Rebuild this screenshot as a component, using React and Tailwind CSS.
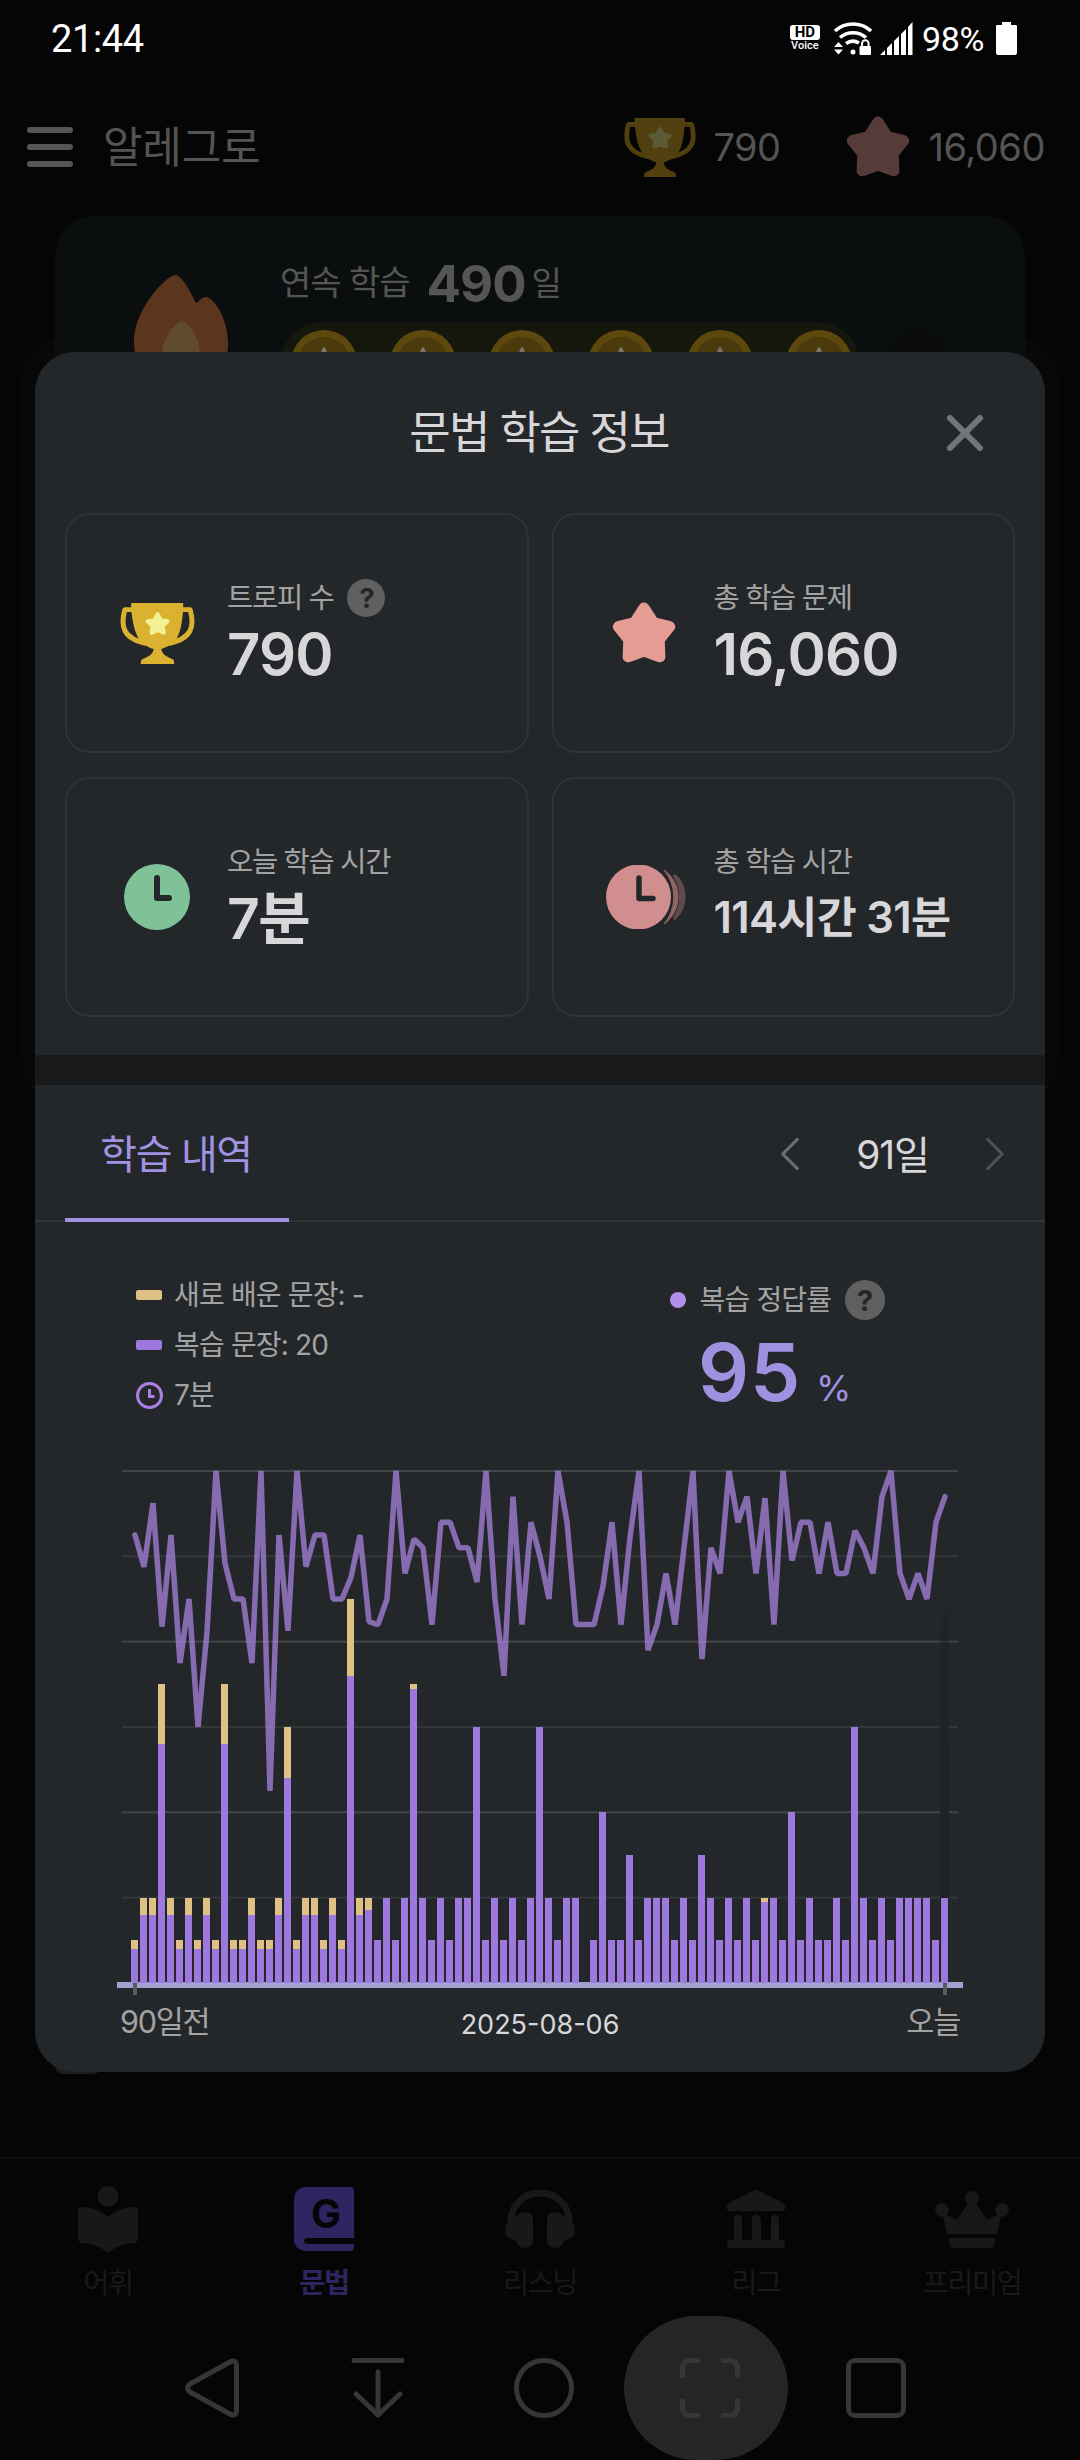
import { ChevronLeft, ChevronRight, X } from 'lucide-react'

// [reviewed, newly learned] sentences per day, oldest first
const SHORT = [8, 2]
const FULL = [16, 4]
const DAYS = [
  SHORT, FULL, FULL, [56, 14], FULL, SHORT, FULL, SHORT, FULL, SHORT,
  [56, 14], SHORT, SHORT, FULL, SHORT, SHORT, FULL, [48, 12], SHORT, FULL,
  FULL, SHORT, FULL, SHORT, [72, 18], FULL, [17, 3], [10, 0], [20, 0], [10, 0],
  [20, 0], [69, 1], [20, 0], [10, 0], [20, 0], [10, 0], [20, 0], [20, 0], [60, 0], [10, 0],
  [20, 0], [10, 0], [20, 0], [10, 0], [20, 0], [60, 0], [20, 0], [10, 0], [20, 0], [20, 0],
  [0, 0], [10, 0], [40, 0], [10, 0], [10, 0], [30, 0], [10, 0], [20, 0], [20, 0], [20, 0],
  [10, 0], [20, 0], [10, 0], [30, 0], [20, 0], [10, 0], [20, 0], [10, 0], [20, 0], [10, 0],
  [19, 1], [20, 0], [10, 0], [40, 0], [10, 0], [20, 0], [10, 0], [10, 0], [20, 0], [10, 0],
  [60, 0], [20, 0], [10, 0], [20, 0], [10, 0], [20, 0], [20, 0], [20, 0], [20, 0], [10, 0],
  [20, 0],
]

// review accuracy in percent
const ACCURACY = [
  87.5, 81.3, 93.7, 69.6, 87.5, 62.5, 75, 50, 68.6, 100,
  82, 75, 75, 62.5, 100, 37.5, 87.5, 68.8, 100, 81.3,
  87.5, 87.5, 75, 75, 79.2, 87.5, 70.6, 70, 75, 100,
  80, 86.7, 85, 70, 90, 90, 85, 85, 78.3, 100,
  75, 60, 95, 70, 90, 83.3, 75, 100, 90, 70,
  70, 70, 77.5, 90, 70, 87, 100, 65, 70, 80,
  70, 85, 100, 63.3, 85, 80, 100, 90, 95, 80,
  94.7, 70, 100, 82.5, 90, 90, 80, 90, 80, 80,
  88.3, 85, 80, 95, 100, 80, 75, 80, 75, 90,
  95,
]

const BASE = 518
const UNIT = 4.267

function Trophy({ className, cup, star }) {
  return (
    <svg viewBox="0 0 225 184" className={className}>
      <path d="M38 20H14C0 70 8 108 80 122M187 20h24c14 50 6 88-66 102" fill="none" stroke={cup} strokeWidth="15" strokeLinejoin="round" />
      <path d="M35 0H190V12C188 60 180 98 165 114C152 128 136 135 124 139C126 155 140 163 158 169Q163 172 163 184H62Q62 172 67 169C85 163 99 155 101 139C90 136 75 129 62 115C46 98 36 60 33 12V2Z" fill={cup} />
      <path d="M113 34l9.500 18 20.500 3-15 14.500 3.500 20.500-18.500-9-18.500 9 3.500-20.500-15-14.500 20.500-3z" fill={star} stroke={star} strokeWidth="12" strokeLinejoin="round" />
    </svg>
  )
}

function Star({ className, color }) {
  return (
    <svg viewBox="0 0 64 62" className={className}>
      <path
        d="M32 6L41.400 20.500L57.700 24.700L47.200 37.900L47.900 54.800L32 49L16.100 54.800L16.800 37.900L6.300 24.700L22.600 20.500Z"
        fill={color} stroke={color} strokeWidth="11" strokeLinejoin="round"
      />
    </svg>
  )
}

function Clock() {
  return (
    <svg viewBox="0 0 66 66" className="w-[66px] h-[66px]">
      <circle cx="33" cy="33" r="33" fill="#80c297" />
      <path d="M33 14V34H45" fill="none" stroke="#24272a" strokeWidth="6" strokeLinecap="round" strokeLinejoin="round" />
    </svg>
  )
}

function ClockStack() {
  return (
    <svg viewBox="0 0 83 64" className="ml-[8px] w-[83px] h-[64px] shrink-0">
      <path d="M58 5A33 33 0 0 1 58 59A42 42 0 0 0 58 5Z" fill="#8f6567" stroke="#8f6567" strokeWidth="1" />
      <path d="M68 10A29 29 0 0 1 68 54A40 40 0 0 0 68 10Z" fill="#604a4d" stroke="#604a4d" strokeWidth="3" />
      <circle cx="32.500" cy="32" r="32.500" fill="#d18e8e" />
      <path d="M33 13V33.500H47" fill="none" stroke="#24272a" strokeWidth="5.500" strokeLinecap="round" strokeLinejoin="round" />
    </svg>
  )
}

function Help({ className }) {
  return (
    <span className={`flex items-center justify-center rounded-full bg-[#5f605f] text-[#24272a] font-bold leading-none ${className}`}>?</span>
  )
}

function StatCard({ icon, label, help, value, valueClass }) {
  return (
    <div className="h-[240px] rounded-[24px] border-2 border-[#313336] flex items-center pl-[54px]">
      <div className="w-[72px] flex items-center justify-center">{icon}</div>
      <div className="ml-[34px] pt-[6px]">
        <div className="h-[38px] flex items-center gap-[14px] text-[28.5px] text-[#a3a3a3] tracking-[-0.045em]">
          {label}
          {help && <Help className="w-[38px] h-[38px] text-[27px]" />}
        </div>
        <div className={`h-[74px] mb-[2px] flex items-center font-semibold text-[#d8d6d8] whitespace-nowrap ${valueClass}`}>{value}</div>
      </div>
    </div>
  )
}

function StatusBar() {
  return (
    <div className="h-[78px] pl-[51px] pr-[63px] flex items-center justify-between text-white font-[Roboto,sans-serif]">
      <span className="text-[38px] tracking-[-0.01em]">21:44</span>
      <div className="flex items-center pb-[2px]">
        <div className="flex flex-col items-center w-[30px] mr-[14px]">
          <span className="w-[30px] h-[15px] rounded-[3px] bg-white text-black text-[15px] leading-[15px] font-bold text-center">HD</span>
          <span className="text-[11px] leading-[12px] font-medium">Voice</span>
        </div>
        <svg viewBox="0 0 38 33" className="w-[38px] h-[33px] mr-[8px]">
          <g fill="none" stroke="#fff" strokeWidth="3.500">
            <path d="M1 9A27 27 0 0 1 37 9" />
            <path d="M6 15.500A20 20 0 0 1 32 15.500" />
            <path d="M12 21.500A12 12 0 0 1 25 21" />
          </g>
          <path d="M0 25L4.500 20L9 25ZM0 27.500L4.500 32.500L9 27.500Z" fill="#fff" />
          <circle cx="19" cy="30" r="2.500" fill="#fff" />
          <rect x="25.500" y="24" width="11.500" height="9" rx="1" fill="#fff" />
          <path d="M28 25V21.500A3.300 3.300 0 0 1 34.600 21.500V25" fill="none" stroke="#fff" strokeWidth="2" />
        </svg>
        <svg viewBox="0 0 33 33" className="w-[33px] h-[33px] mr-[9px]">
          <path d="M0 33L5 28V33ZM7 33V26L12 21V33ZM14 33V19L19 14V33ZM21 33V12L26 7V33ZM28 33V5L32.500 0V33Z" fill="#fff" />
        </svg>
        <span className="pt-[2px] text-[34px] tracking-[-0.01em] mr-[12px]">98%</span>
        <svg viewBox="0 0 21 33" className="w-[21px] h-[33px]">
          <path d="M6 0H15V3H20Q21 3 21 4V31Q21 33 19 33H2Q0 33 0 31V4Q0 3 1 3H6Z" fill="#fff" />
        </svg>
      </div>
    </div>
  )
}

function Header() {
  return (
    <div className="h-[138px] pl-[27px] pr-[35px] flex items-center text-[#545454]">
      <div className="flex flex-col gap-[11px]">
        <span className="w-[46px] h-[6px] rounded-full bg-[#555]" />
        <span className="w-[46px] h-[6px] rounded-full bg-[#555]" />
        <span className="w-[46px] h-[6px] rounded-full bg-[#555]" />
      </div>
      <span className="ml-[30px] pt-[1px] text-[43px] tracking-[-0.005em]">알레그로</span>
      <Trophy className="ml-auto w-[72px] h-[59px]" cup="#513f0f" star="#5b5b38" />
      <span className="ml-[18px] text-[38px] tracking-[-0.015em]">790</span>
      <Star className="ml-[65px] w-[64px] h-[62px]" color="#573b38" />
      <span className="ml-[19px] text-[38px] tracking-[-0.012em]">16,060</span>
    </div>
  )
}

function StreakCard() {
  return (
    <div className="relative mx-[55px] h-[260px] rounded-[40px] bg-[#0b0e0f] flex pl-[79px] text-[#555]">
      <svg viewBox="0 0 94 120" className="mt-[59px] w-[94px] h-[120px]">
        <path d="M41 0C30 2 0 36 0 66C0 100 20 120 47 120S94 100 94 68C94 46 82 24 72 22C68 22 66 26 62 28C56 16 48 0 41 0Z" fill="#5b361c" />
        <path d="M47 46C40 48 28 64 28 80V120H66V80C66 62 54 46 47 46Z" fill="#604b2d" />
      </svg>
      <div className="ml-[52px]">
        <div className="mt-[36px] h-[62px] flex items-center">
          <span className="text-[34px] tracking-[-0.03em]">연속 학습</span>
          <span className="ml-[17px] text-[51px] font-bold tracking-[-0.02em]">490</span>
          <span className="ml-[6px] text-[33px]">일</span>
        </div>
        <div className="mt-[8px] w-[580px] h-[84px] rounded-full bg-[#15160c] flex gap-[33px] pt-[8px] pl-[11px]">
          {[1, 2, 3, 4, 5, 6].map((n) => (
            <svg key={n} viewBox="0 0 66 66" className="w-[66px] h-[66px] shrink-0">
              <circle cx="33" cy="33" r="33" fill="#5d490e" />
              <circle cx="33" cy="33" r="26" fill="#4b3b0c" />
              <path d="M28 30Q31 17 33 17T38 30Z" fill="#77776f" />
            </svg>
          ))}
          <span className="w-[66px] h-[66px] shrink-0 rounded-full bg-[#0a0b0b]" />
        </div>
      </div>
    </div>
  )
}

const TABS = [
  {
    label: '어휘',
    icon: (
      <svg viewBox="0 0 60 67" className="w-[60px] h-[67px]">
        <circle cx="30" cy="10.500" r="10.500" />
        <path d="M0 25Q0 20 5 21Q20 22 30 31Q40 22 55 21Q60 20 60 25V52Q60 57 55 57Q40 58 30 67Q20 58 5 57Q0 57 0 52Z" />
      </svg>
    ),
  },
  {
    label: '문법',
    active: true,
    icon: (
      <svg viewBox="0 0 60 64" className="w-[60px] h-[64px]">
        <path d="M14 0H56Q60 0 60 4V51H15Q10 51 10 54T15 57H60V60Q60 64 56 64H14Q0 64 0 52V13Q0 0 14 0Z" />
        <text x="32" y="40.500" textAnchor="middle" fontSize="40" fontWeight="700" fill="#050505">G</text>
      </svg>
    ),
  },
  {
    label: '리스닝',
    icon: (
      <svg viewBox="0 0 70 58" className="w-[70px] h-[58px]">
        <path d="M6 36V31A29 28 0 0 1 64 31V36" fill="none" stroke="#181818" strokeWidth="7" />
        <path d="M10 28Q14 22 20 22Q28 22 28 30V50Q28 58 20 58Q12 58 11 50Q0 49 0 40Q0 33 5 31ZM60 28Q56 22 50 22Q42 22 42 30V50Q42 58 50 58Q58 58 59 50Q70 49 70 40Q70 33 65 31Z" />
      </svg>
    ),
  },
  {
    label: '리그',
    icon: (
      <svg viewBox="0 0 58 58" className="w-[58px] h-[58px]">
        <path d="M26 1Q29-1 32 1L56 13Q58 14 58 16V19Q58 21 56 21H2Q0 21 0 19V16Q0 14 2 13Z" />
        <path d="M7 50V29Q7 25 11 25T15 29V50H25V29Q25 25 29 25T34 29V50H44V29Q44 25 48 25T52 29V50H56Q58 50 58 52V56Q58 58 56 58H2Q0 58 0 56V52Q0 50 2 50Z" />
      </svg>
    ),
  },
  {
    label: '프리미엄',
    icon: (
      <svg viewBox="0 0 74 57" className="w-[74px] h-[57px]">
        <circle cx="7" cy="19" r="7" />
        <circle cx="37" cy="7" r="7" />
        <circle cx="67" cy="19" r="7" />
        <path d="M7 22L22 29L34 11H40L52 29L67 22L62 43H12ZM13 47H61L59 54Q58 57 55 57H19Q16 57 15 54Z" />
      </svg>
    ),
  },
]

function BottomTabs() {
  return (
    <div className="h-[159px] border-t-2 border-[#0b0e0e] grid grid-cols-5">
      {TABS.map((tab) => (
        <div key={tab.label} className={`flex flex-col items-center ${tab.active ? 'text-[#2d2460] fill-[#2d2460] font-bold' : 'text-[#191919] fill-[#181818]'}`}>
          <div className="mt-[20px] h-[80px] flex items-center">{tab.icon}</div>
          <span className="h-[48px] flex items-center text-[28.5px] tracking-[-0.055em]">{tab.label}</span>
        </div>
      ))}
    </div>
  )
}

function SystemNav() {
  return (
    <div className="h-[144px] pl-[129px] flex items-center">
      <div className="w-[166px] flex justify-center">
        <svg viewBox="0 0 60 60" className="w-[60px] h-[60px]" fill="none" stroke="#363636" strokeWidth="5" strokeLinejoin="round">
          <path d="M48 4Q54 1 54.500 7V53Q54 59 48 56L8 34Q3 30 8 26Z" />
        </svg>
      </div>
      <div className="w-[166px] flex justify-center">
        <svg viewBox="0 0 54 60" className="w-[54px] h-[60px]" fill="none" stroke="#363636" strokeWidth="5" strokeLinecap="round" strokeLinejoin="round">
          <path d="M3 2.500H51M27 14V57M5 36L27 57L49 36" />
        </svg>
      </div>
      <div className="w-[166px] flex justify-center">
        <span className="w-[60px] h-[60px] rounded-full border-[5px] border-[#363636]" />
      </div>
      <div className="w-[166px] flex justify-center">
        <div className="-ml-[8px] w-[164px] h-[144px] shrink-0 rounded-[74px] bg-[#252525] flex items-center justify-center">
          <svg viewBox="0 0 60 60" className="ml-[8px] w-[60px] h-[60px]" fill="none" stroke="#353535" strokeWidth="5">
            <path d="M2.500 20V10Q2.500 2.500 10 2.500H20M41 2.500H50Q57.500 2.500 57.500 10V20M57.500 41V50Q57.500 57.500 50 57.500H41M20 57.500H10Q2.500 57.500 2.500 50V41" />
          </svg>
        </div>
      </div>
      <div className="w-[166px] flex justify-center">
        <span className="w-[60px] h-[60px] rounded-[9px] border-[5px] border-[#363636]" />
      </div>
    </div>
  )
}

function HistoryChart() {
  const line = ACCURACY.map((a, i) => `${18 + i * 9},${BASE - a * 5.12}`).join(' ')
  return (
    <svg viewBox="0 0 846 531" className="block ml-[82px] w-[846px] h-[531px]">
      <defs>
        <linearGradient id="today" x1="0" y1="0" x2="0" y2="1">
          <stop offset="0" stopColor="#1f2123" stopOpacity="0" />
          <stop offset="0.5" stopColor="#1f2123" />
        </linearGradient>
      </defs>
      {[0, 1, 2, 3, 4, 5].map((n) => (
        <rect key={n} x="5" y={5 + n * 85.33} width="836" height="2" fill={n % 2 ? '#34373a' : '#43474a'} />
      ))}
      <rect x="823" y="60" width="9" height="458" fill="url(#today)" />
      <rect x="0" y="517" width="846" height="6" fill="#a1a0cf" />
      {DAYS.map(([review, fresh], i) => (
        <g key={i}>
          <rect x={14 + i * 9} y={Math.round(BASE - review * UNIT)} width="7" height={BASE - Math.round(BASE - review * UNIT)} fill="#9e79dd" />
          <rect
            x={14 + i * 9}
            y={Math.round(BASE - (review + fresh) * UNIT)}
            width="7"
            height={Math.round(BASE - review * UNIT) - Math.round(BASE - (review + fresh) * UNIT)}
            fill="#dfc185"
          />
        </g>
      ))}
      <polyline points={line} fill="none" stroke="#a681dc" strokeOpacity="0.76" strokeWidth="5.500" strokeLinejoin="bevel" strokeLinecap="round" />
      <rect x="16" y="518" width="4" height="12" fill="#585a5c" />
      <rect x="826" y="518" width="4" height="12" fill="#585a5c" />
    </svg>
  )
}

function StudyModal() {
  return (
    <div className="absolute left-[35px] top-[352px] w-[1010px] h-[1720px] rounded-[40px] bg-[#24272a] overflow-hidden">
      <div className="relative h-[161px] flex items-center justify-center">
        <h1 className="pr-[2px] text-[45px] leading-none font-normal tracking-[-0.04em] text-[#d8d6d8]">문법 학습 정보</h1>
        <X className="absolute right-[50px] w-[60px] h-[60px] text-[#70777c]" strokeWidth={2.4} />
      </div>

      <div className="mx-[30px] grid grid-cols-2 gap-x-[23px] gap-y-[24px]">
        <StatCard
          icon={<Trophy className="w-[75px] h-[61px] shrink-0" cup="#dab22f" star="#f2f295" />}
          label="트로피 수" help value="790" valueClass="text-[58px] tracking-[-0.015em]"
        />
        <StatCard
          icon={<Star className="w-[64px] h-[62px]" color="#e49c93" />}
          label="총 학습 문제" value="16,060" valueClass="text-[58px] tracking-[-0.015em]"
        />
        <StatCard icon={<Clock />} label="오늘 학습 시간" value="7분" valueClass="text-[57px] tracking-[-0.03em]" />
        <StatCard icon={<ClockStack />} label="총 학습 시간" value="114시간 31분" valueClass="text-[43.5px] tracking-[-0.015em]" />
      </div>

      <div className="mt-[38px] h-[30px] bg-[#191a1c]" />

      <div className="h-[137px] border-b-2 border-[#313336] flex justify-between pl-[30px] pr-[31px]">
        <div className="relative w-[224px] h-full flex items-center justify-center text-[40px] tracking-[-0.035em] text-[#a292e3]">
          <span className="pt-[4px] pr-[2px]">학습 내역</span>
          <span className="absolute left-0 -bottom-[2px] w-full h-[4px] bg-[#a292e3]" />
        </div>
        <div className="flex items-center pt-[3px] text-[#d8d6d8]">
          <ChevronLeft className="w-[58px] h-[58px] text-[#697177]" strokeWidth={1.3} />
          <span className="w-[147px] text-center text-[39px] tracking-[-0.03em]">91일</span>
          <ChevronRight className="w-[58px] h-[58px] -mr-[10px] text-[#4c5358]" strokeWidth={1.3} />
        </div>
      </div>

      <div className="h-[243px] flex text-[#a3a3a3] text-[28px] tracking-[-0.03em]">
        <div className="w-[564px] pt-[48px] pl-[101px]">
          <div className="h-[50px] flex items-center gap-[12px]">
            <span className="w-[26px] h-[10px] rounded-[2px] bg-[#dfc185]" />새로 배운 문장: -
          </div>
          <div className="h-[50px] flex items-center gap-[12px]">
            <span className="w-[26px] h-[10px] rounded-[2px] bg-[#9e79dd]" />복습 문장: 20
          </div>
          <div className="h-[50px] flex items-center gap-[11px]">
            <svg viewBox="0 0 27 27" className="w-[27px] h-[27px]" fill="none" stroke="#ab7fe0" strokeWidth="3">
              <circle cx="13.500" cy="13.500" r="12" />
              <path d="M13.500 7V14.500H18.500" />
            </svg>
            7분
          </div>
        </div>
        <div className="pt-[53px] pl-[71px]">
          <div className="h-[50px] flex items-center gap-[13.5px]">
            <span className="w-[16px] h-[16px] rounded-full bg-[#b08ee9]" />
            복습 정답률
            <Help className="w-[40px] h-[40px] text-[29px]" />
          </div>
          <div className="pl-[28px] flex items-baseline text-[#a090e0]">
            <span className="text-[80px] leading-[94px] font-semibold tracking-[0.01em]">95</span>
            <span className="ml-[15px] text-[36px] tracking-normal">%</span>
          </div>
        </div>
      </div>

      <HistoryChart />

      <div className="mt-[5px] h-[42px] pl-[85px] pr-[85px] flex items-center text-[#a3a3a3] text-[30.5px] tracking-[-0.04em]">
        <span className="flex-1">90일전</span>
        <span className="pt-[4px] text-[27px] tracking-normal text-[#d8d6d8]">2025-08-06</span>
        <span className="flex-1 text-right">오늘</span>
      </div>
    </div>
  )
}

export default function App() {
  return (
    <div className="relative w-[1080px] h-[2460px] overflow-hidden bg-[#050505] flex flex-col leading-none font-['Inter','Noto_Sans_CJK_KR',sans-serif]">
      <div className="absolute left-[22px] top-[335px] w-[1036px] h-[770px] rounded-[46px] bg-[#080808]" />
      <StatusBar />
      <Header />
      <StreakCard />
      <div className="absolute left-[55px] top-[2040px] w-[46px] h-[34px] rounded-b-[8px] bg-[#1c1f20]" />
      <div className="mt-auto">
        <BottomTabs />
        <SystemNav />
      </div>
      <StudyModal />
    </div>
  )
}
